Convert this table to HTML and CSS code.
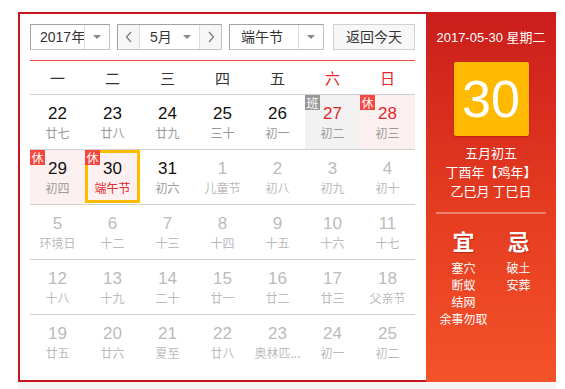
FILE: index.html
```html
<!DOCTYPE html>
<html lang="zh-CN">
<head>
<meta charset="utf-8">
<title>万年历</title>
<link rel="stylesheet" href="styles.css">
</head>
<body>
<div class="wrap">
  <div class="calendar">
    <div class="main">
      <div class="toolbar">
        <div class="select year">
          <span class="sel-text">2017年</span>
          <span class="sel-arrow"><i class="tri"></i></span>
        </div>
        <div class="month-group">
          <span class="nav-btn"><svg width="8" height="12" viewBox="0 0 8 12"><polyline points="6,1 1.5,6 6,11" fill="none" stroke="#777" stroke-width="1.2"/></svg></span>
          <span class="month-text">5月<i class="tri"></i></span>
          <span class="nav-btn"><svg width="8" height="12" viewBox="0 0 8 12"><polyline points="2,1 6.5,6 2,11" fill="none" stroke="#777" stroke-width="1.2"/></svg></span>
        </div>
        <div class="select holiday">
          <span class="sel-text">端午节</span>
          <span class="sel-arrow"><i class="tri"></i></span>
        </div>
        <div class="today-btn">返回今天</div>
      </div>
      <div class="weekdays">
        <span>一</span><span>二</span><span>三</span><span>四</span><span>五</span><span class="wk">六</span><span class="wk">日</span>
      </div>
      <div class="days">
        <div class="row">
          <div class="cell"><b>22</b><em>廿七</em></div>
          <div class="cell"><b>23</b><em>廿八</em></div>
          <div class="cell"><b>24</b><em>廿九</em></div>
          <div class="cell"><b>25</b><em>三十</em></div>
          <div class="cell"><b>26</b><em>初一</em></div>
          <div class="cell work red"><span class="badge ban">班</span><b>27</b><em>初二</em></div>
          <div class="cell rest red"><span class="badge">休</span><b>28</b><em>初三</em></div>
        </div>
        <div class="row">
          <div class="cell rest"><span class="badge">休</span><b>29</b><em>初四</em></div>
          <div class="cell rest today"><span class="badge">休</span><b>30</b><em class="fest">端午节</em></div>
          <div class="cell"><b>31</b><em>初六</em></div>
          <div class="cell other"><b>1</b><em>儿童节</em></div>
          <div class="cell other"><b>2</b><em>初八</em></div>
          <div class="cell other"><b>3</b><em>初九</em></div>
          <div class="cell other"><b>4</b><em>初十</em></div>
        </div>
        <div class="row">
          <div class="cell other"><b>5</b><em>环境日</em></div>
          <div class="cell other"><b>6</b><em>十二</em></div>
          <div class="cell other"><b>7</b><em>十三</em></div>
          <div class="cell other"><b>8</b><em>十四</em></div>
          <div class="cell other"><b>9</b><em>十五</em></div>
          <div class="cell other"><b>10</b><em>十六</em></div>
          <div class="cell other"><b>11</b><em>十七</em></div>
        </div>
        <div class="row">
          <div class="cell other"><b>12</b><em>十八</em></div>
          <div class="cell other"><b>13</b><em>十九</em></div>
          <div class="cell other"><b>14</b><em>二十</em></div>
          <div class="cell other"><b>15</b><em>廿一</em></div>
          <div class="cell other"><b>16</b><em>廿二</em></div>
          <div class="cell other"><b>17</b><em>廿三</em></div>
          <div class="cell other"><b>18</b><em>父亲节</em></div>
        </div>
        <div class="row last">
          <div class="cell other"><b>19</b><em>廿五</em></div>
          <div class="cell other"><b>20</b><em>廿六</em></div>
          <div class="cell other"><b>21</b><em>夏至</em></div>
          <div class="cell other"><b>22</b><em>廿八</em></div>
          <div class="cell other"><b>23</b><em>奥林匹...</em></div>
          <div class="cell other"><b>24</b><em>初一</em></div>
          <div class="cell other"><b>25</b><em>初二</em></div>
        </div>
      </div>
    </div>
    <div class="side">
      <div class="side-date">2017-05-30 星期二</div>
      <div class="big-day">30</div>
      <div class="lunar">
        <p>五月初五</p>
        <p>丁酉年【鸡年】</p>
        <p>乙巳月 丁巳日</p>
      </div>
      <div class="sep"></div>
      <div class="yiji">
        <div class="col">
          <div class="yj-title">宜</div>
          <p>塞穴</p><p>断蚁</p><p>结网</p><p>余事勿取</p>
        </div>
        <div class="col">
          <div class="yj-title">忌</div>
          <p>破土</p><p>安葬</p>
        </div>
      </div>
    </div>
  </div>
  <div class="foot"></div>
</div>
</body>
</html>
```

FILE: styles.css
```css
* { box-sizing: border-box; }
html, body { margin: 0; padding: 0; background: #fff; }
body {
  font-family: "Liberation Sans", "Noto Sans CJK SC", sans-serif;
  color: #333;
}
.wrap {
  margin: 12px 0 0 18px;
  width: 538px;
}
.calendar {
  display: flex;
  height: 370px;
}
.main {
  width: 408px;
  border: 2px solid #c8161d;
  border-right: none;
  padding: 10px 11px 10px 10px;
}
.toolbar {
  display: flex;
  height: 26px;
  font-size: 14px;
  line-height: 24px;
  white-space: nowrap;
}
.select {
  display: flex;
  border: 1px solid #c4c4c4;
  border-top-color: #a2a2a2;
  border-left-color: #a2a2a2;
  background: #fff;
}
.sel-text { padding-left: 9px; color: #333; white-space: nowrap; overflow: hidden; }
.sel-arrow {
  width: 25px;
  flex: none;
  border-left: 1px solid #ddd;
  display: flex;
  align-items: center;
  justify-content: center;
}
.tri {
  display: inline-block;
  width: 0; height: 0;
  border-left: 4px solid transparent;
  border-right: 4px solid transparent;
  border-top: 4px solid #888;
}
.year { width: 80px; }
.year .sel-text { width: 54px; }
.month-group {
  display: flex;
  margin-left: 7px;
  width: 105px;
  border: 1px solid #c4c4c4;
  border-top-color: #a2a2a2;
  border-left-color: #a2a2a2;
}
.nav-btn {
  width: 22px;
  background: #f6f6f6;
  display: flex;
  align-items: center;
  justify-content: center;
}
.nav-btn:first-child { border-right: 1px solid #ddd; }
.nav-btn:last-child { border-left: 1px solid #ddd; }
.month-text {
  flex: 1;
  padding-left: 10px;
  padding-right: 8px;
  display: flex;
  align-items: center;
  justify-content: space-between;
}
.holiday { margin-left: 7px; width: 95px; }
.holiday .sel-text { width: 69px; padding-left: 11px; }
.today-btn {
  margin-left: 9px;
  width: 82px;
  border: 1px solid #d2d2d2;
  background: #f7f7f7;
  text-align: center;
  color: #333;
}
.weekdays {
  margin-top: 10px;
  border-top: 1px solid #f04a45;
  border-bottom: 1px solid #cfcfcf;
  height: 35px;
  display: grid;
  grid-template-columns: repeat(7, 55px);
  font-size: 15px;
  line-height: 33px;
  text-align: center;
  color: #333;
  font-family: "Noto Sans CJK SC", sans-serif;
}
.weekdays .wk { color: #e5262b; }
.row {
  display: grid;
  grid-template-columns: repeat(7, 55px);
  height: 55px;
  border-bottom: 1px solid #cfcfcf;
}
.row.last { border-bottom: none; }
.cell {
  position: relative;
  text-align: center;
  padding-top: 10px;
}
.cell b {
  display: block;
  font-weight: normal;
  font-size: 17px;
  line-height: 18px;
  color: #111;
  font-family: "Liberation Sans", sans-serif;
}
.cell em {
  display: block;
  font-style: normal;
  font-size: 12px;
  line-height: 16px;
  margin-top: 2px;
  color: #999;
  font-family: "Noto Sans CJK SC", sans-serif;
  white-space: nowrap;
}
.cell.red b { color: #e5262b; }
.cell.rest { background: #fdf0f0; }
.cell.work { background: #f2f2f2; }
.cell.other b, .cell.other em { color: #bbb; }
.cell em.fest { color: #e5262b; }
.cell.today { box-shadow: inset 0 0 0 3px #ffbb00; height: 53px; }
.badge {
  position: absolute;
  top: 0; left: 0;
  width: 15px; height: 15px;
  background: #f5473f;
  color: #fff;
  font-size: 12px;
  line-height: 15px;
  text-align: center;
  font-family: "Noto Sans CJK SC", sans-serif;
}
.badge.ban { background: #999; }
.side {
  width: 130px;
  background: linear-gradient(to bottom, #cb1d1c 0%, #e43a20 50%, #f45229 100%);
  color: #fff;
  padding: 18px 10px 0;
  text-align: center;
  font-family: "Noto Sans CJK SC", sans-serif;
}
.side-date {
  font-size: 13px;
  line-height: 16px;
  font-family: "Liberation Sans", "Noto Sans CJK SC", sans-serif;
}
.big-day {
  margin: 16px auto 0;
  width: 75px;
  height: 74px;
  background: #ffb900;
  border-radius: 2px;
  box-shadow: 0 1px 2px rgba(120,0,0,0.35);
  font-size: 52px;
  line-height: 74px;
  font-family: "Liberation Sans", sans-serif;
}
.lunar { margin-top: 7px; font-size: 13px; line-height: 19px; }
.lunar p { margin: 0; }
.sep {
  margin-top: 12px;
  height: 2px;
  background: rgba(255,255,255,0.35);
}
.yiji {
  display: grid;
  grid-template-columns: 55px 55px;
  margin-top: 13px;
}
.yj-title {
  font-size: 22px;
  line-height: 26px;
  font-weight: bold;
  text-shadow: 1px 1px 1px rgba(140,0,0,0.45);
  margin-bottom: 6px;
}
.col p {
  margin: 0;
  font-size: 12px;
  line-height: 17px;
  white-space: nowrap;
}
.foot {
  height: 7px;
  background: #f4f4f4;
}
```
